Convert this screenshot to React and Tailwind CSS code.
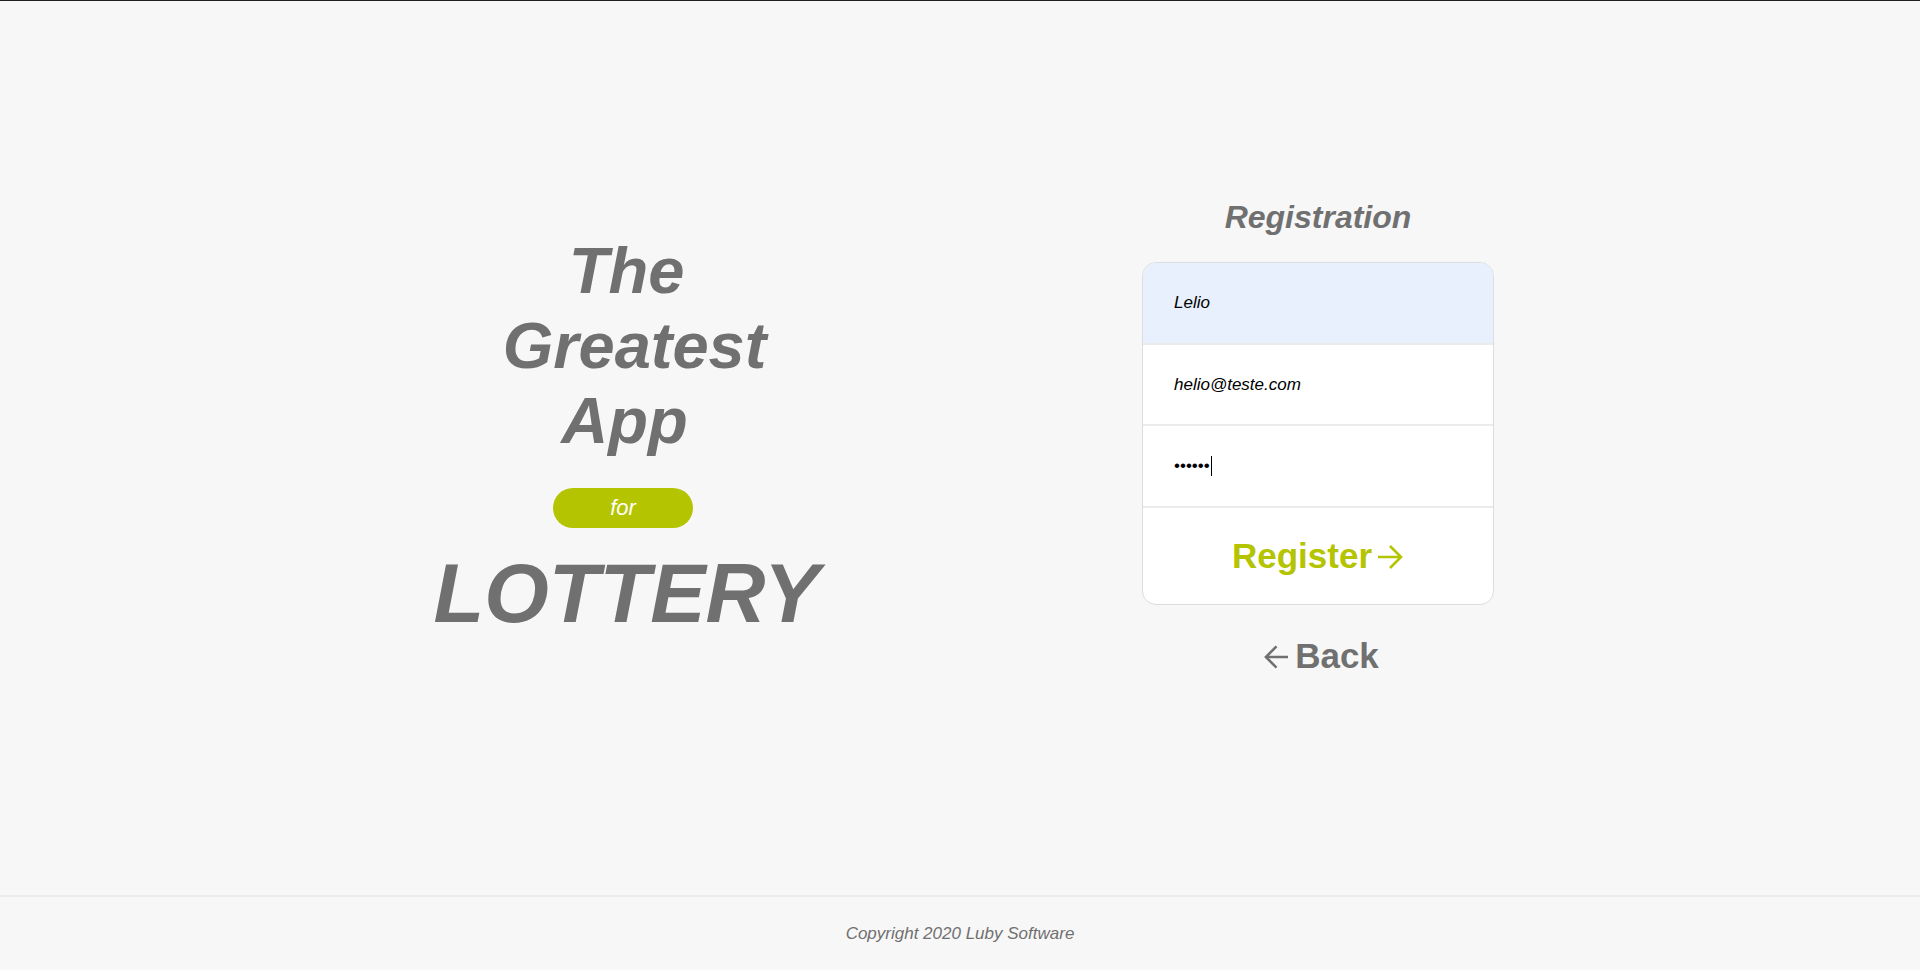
export default function App() {
  const font = { fontFamily: '"Liberation Sans", Arial, sans-serif' };
  return (
    <div style={font} className="w-full h-[970px] bg-[#f7f7f7] border-t border-[#1f1f1f] flex flex-col">
      <main className="flex-1 flex items-center justify-center gap-[315px] pb-[22px]">
        <div className="w-[400px] flex flex-col items-center text-[#707070]">
          <h1 className="flex flex-col items-center text-[65px] leading-[75px] font-bold italic text-center">
            <span className="ml-[1px]">The</span>
            <span className="ml-[17px]">Greatest</span>
            <span className="mr-[3px]">App</span>
          </h1>
          <div className="mt-[30px] mr-[6px] w-[140px] h-[40px] rounded-full bg-[#b5c401] flex items-center justify-center text-white italic text-[22px]">
            for
          </div>
          <div className="mt-[18px] ml-[1px] text-[83px] leading-[96px] font-bold italic">LOTTERY</div>
        </div>
        <div className="w-[352px] ml-[1px] flex flex-col items-center">
          <h2 className="text-[32px] leading-[39px] font-bold italic text-[#707070]">Registration</h2>
          <div className="mt-[25px] w-full bg-white border border-[#dddddd] rounded-[14px] overflow-hidden">
            <div className="h-[82px] bg-[#e8f0fe] border-b-2 border-[#ebebeb] flex items-center px-[31px] text-[17px] italic text-black">
              Lelio
            </div>
            <div className="h-[81px] border-b-2 border-[#ebebeb] flex items-center px-[31px] text-[17px] italic text-black">
              helio@teste.com
            </div>
            <div className="h-[82px] border-b-2 border-[#ebebeb] flex items-center px-[31px] text-[17px] text-black">
              <span>••••••</span>
              <span className="ml-[1px] w-[1px] h-[20px] bg-black" />
            </div>
            <div className="h-[96px] flex items-center justify-center text-[#b5c401]">
              <span className="text-[35px] font-bold">Register</span>
              <svg className="ml-[5px] mt-[2px]" width="27" height="26" viewBox="0 0 27 26" fill="none" stroke="#b5c401" strokeWidth="2.6" strokeLinecap="butt" strokeLinejoin="miter">
                <path d="M1 13H24" />
                <path d="M13 2L24 13L13 24" />
              </svg>
            </div>
          </div>
          <div className="mt-[31px] flex items-center text-[#707070] ml-[6px]">
            <svg className="mr-[6px] mt-[2px]" width="26" height="26" viewBox="0 0 27 26" fill="none" stroke="#707070" strokeWidth="2.6">
              <path d="M26 13H3" />
              <path d="M14 2L3 13L14 24" />
            </svg>
            <span className="text-[35px] leading-[40px] font-bold">Back</span>
          </div>
        </div>
      </main>
      <footer className="h-[75px] border-t-2 border-[#ebebeb] flex items-center justify-center">
        <span className="text-[17px] italic text-[#707070]">Copyright 2020 Luby Software</span>
      </footer>
    </div>
  );
}
